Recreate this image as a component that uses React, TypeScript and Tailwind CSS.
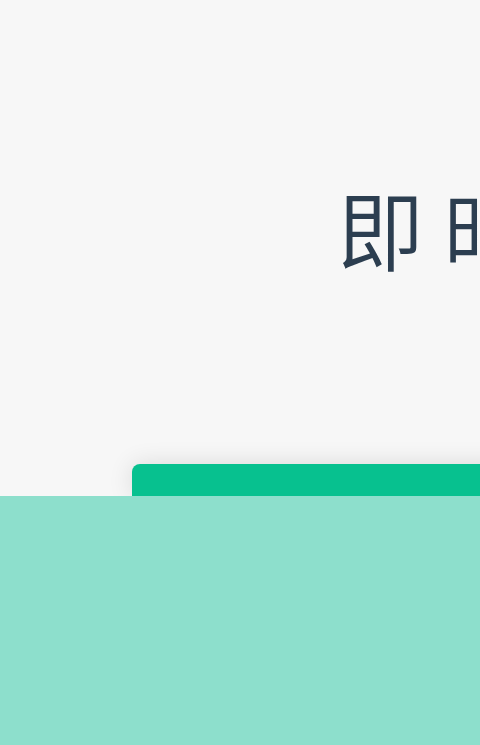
export default function App() {
  return (
    <div className="h-[745px] w-[480px] overflow-hidden bg-[#f7f7f7] flex flex-col" style={{ fontFamily: '"Noto Sans CJK SC", "Noto Sans", sans-serif' }}>
      <div className="h-[464px] pt-[171px] pl-[337px] whitespace-nowrap">
        <h1 className="text-[87px] leading-[112px] font-[350] text-[#2c3e50] tracking-[19px]">即时通讯</h1>
      </div>
      <div className="h-[32px] ml-[132px] w-[400px] rounded-t-lg bg-[#07c18f] shadow-[0_0_24px_rgba(0,0,0,0.12)]" />
      <div className="flex-1 bg-[#8ddfcc] relative z-10" />
    </div>
  );
}
